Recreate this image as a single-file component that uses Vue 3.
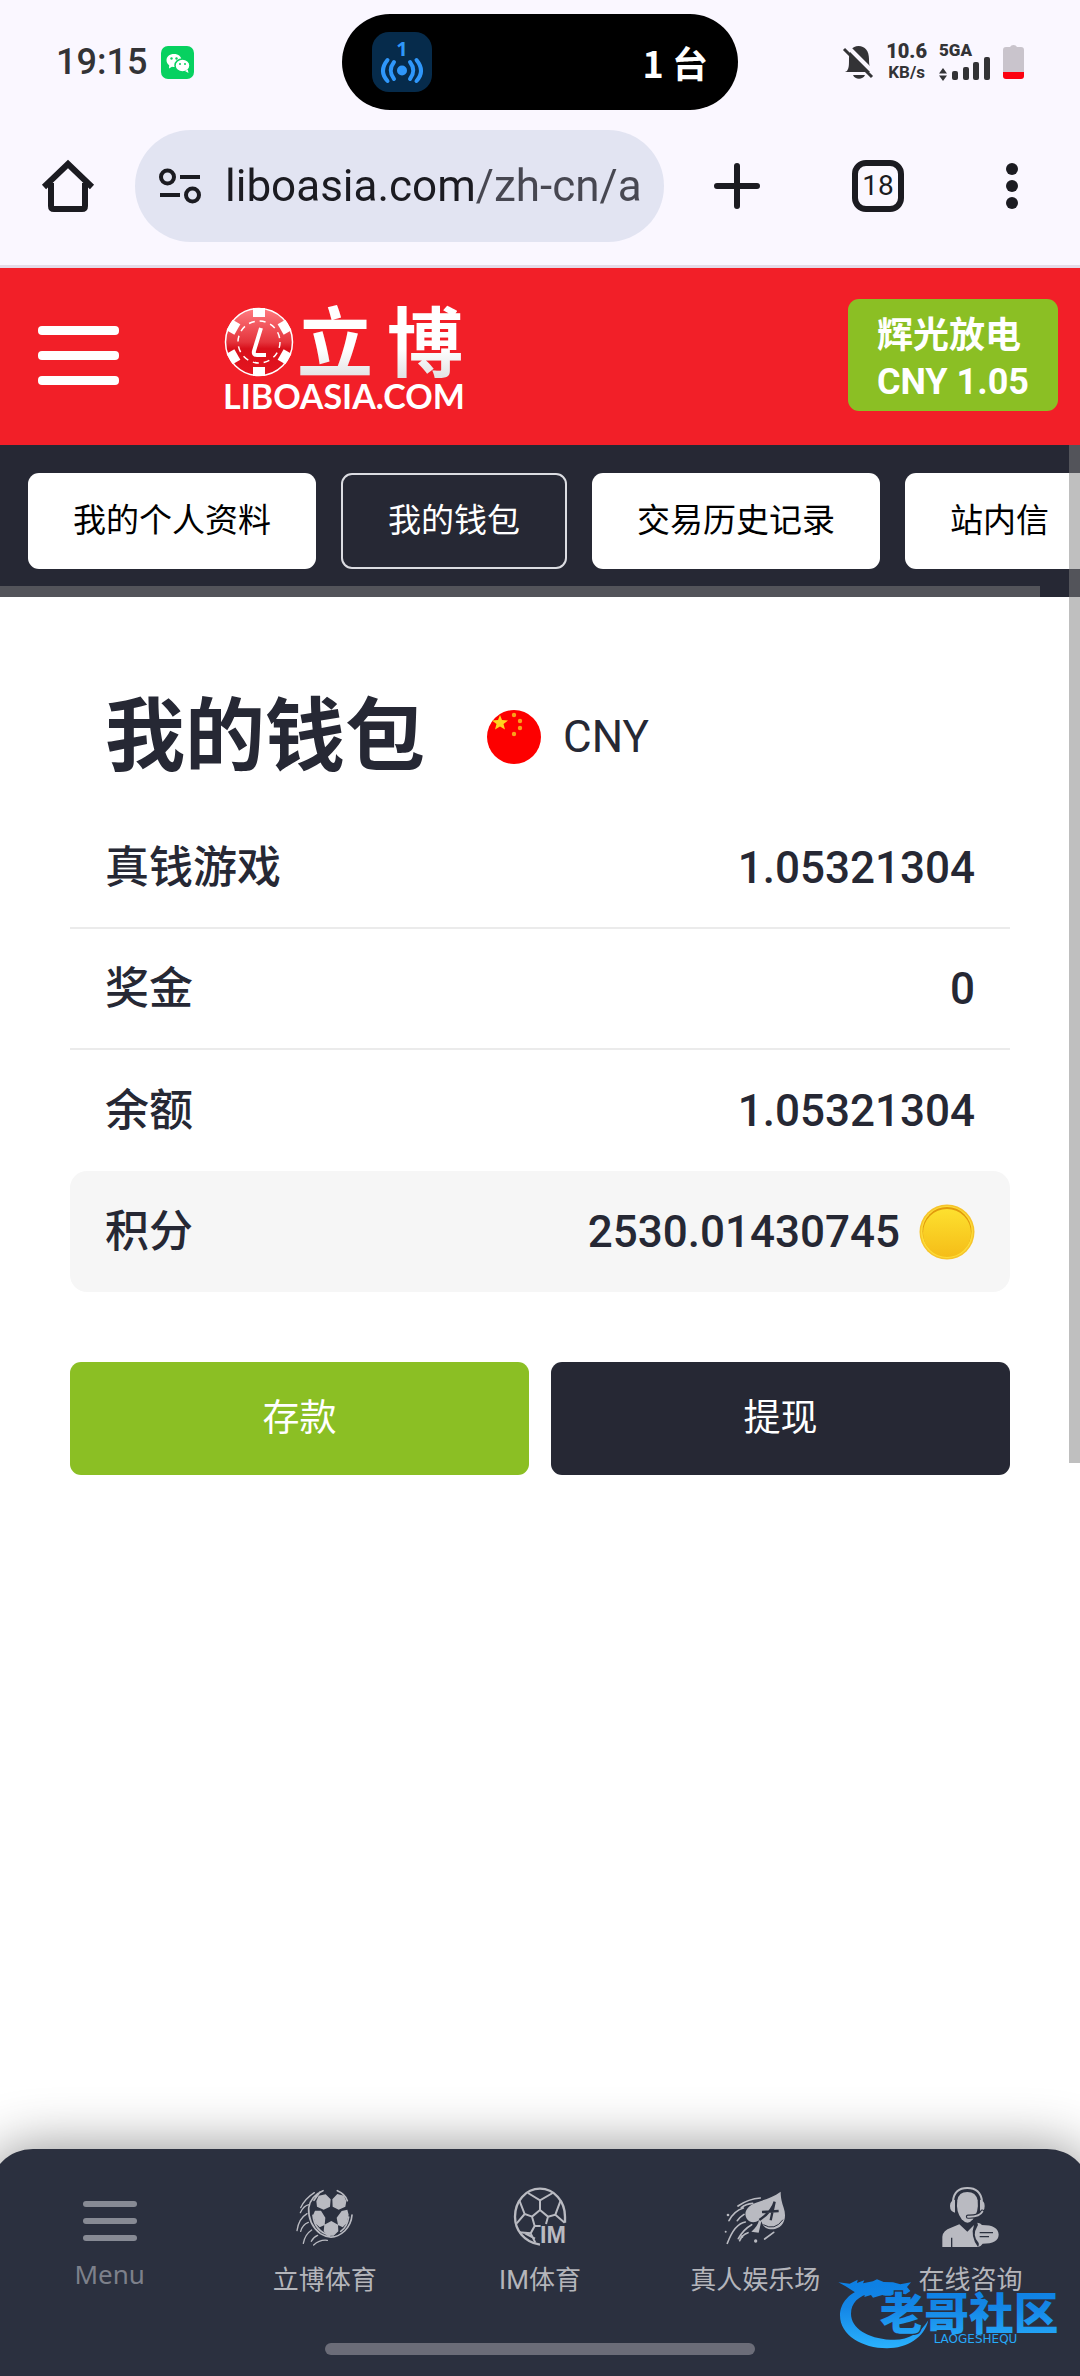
<script setup>
import { ref } from 'vue'

const address = ref('liboasia.com/zh-cn/account')

const tabs = [
  { label: '我的个人资料', active: false },
  { label: '我的钱包', active: true },
  { label: '交易历史记录', active: false },
  { label: '站内信', active: false },
]

const balances = [
  { label: '真钱游戏', value: '1.05321304' },
  { label: '奖金', value: '0' },
  { label: '余额', value: '1.05321304' },
  { label: '积分', value: '2530.01430745', points: true },
]
</script>

<template>
  <div class="screen">
    <div class="chrome">
      <div class="status">
        <div class="status-left">
          <span class="time">19:15</span>
          <svg width="33" height="33" viewBox="0 0 33 33" aria-hidden="true">
            <rect width="33" height="33" rx="7" fill="#07d160" />
            <path d="M13 8c-4.500 0-7.500 2.700-7.500 6.300 0 2 1 3.800 2.700 5L8 22.500l3-1.800c7 1.300 9.500-2 9.500-6.400C20.500 10.700 17.500 8 13 8z" fill="#fff" />
            <ellipse cx="21.500" cy="19.500" rx="7.500" ry="6.500" fill="#fff" stroke="#07d160" stroke-width="1.500" />
            <path d="M24 25l3.500 2-.8-3.500z" fill="#fff" />
            <g fill="#07d160"><circle cx="10.500" cy="12.500" r="1.200" /><circle cx="15.500" cy="12.500" r="1.200" /><circle cx="19" cy="18" r="1" /><circle cx="24" cy="18" r="1" /></g>
          </svg>
        </div>
        <div class="island">
          <svg width="60" height="60" viewBox="0 0 60 60" aria-hidden="true">
            <rect width="60" height="60" rx="17" fill="#062b4b" />
            <text x="30" y="24" text-anchor="middle" font-family="Noto Sans, sans-serif" font-weight="700" font-size="20" fill="#2f97fa">1</text>
            <circle cx="30" cy="38.500" r="5" fill="#2f97fa" />
            <path d="M22 30q-6.500 8.500 0 17M38 30q6.500 8.500 0 17M15.500 28q-9 11 0 21M44.500 28q9 11 0 21" fill="none" stroke="#2f97fa" stroke-width="4" stroke-linecap="round" />
          </svg>
          <span>1 台</span>
        </div>
        <div class="status-right">
          <svg width="31" height="35" viewBox="0 0 31 35" aria-hidden="true">
            <path d="M4 26c2-3 2-6 2-12C6 6 9 1 15.500 1S26 6 26 14c0 7 1 9 4 13H2zM10 30h12c-2 5-10 5-12 0z" fill="#333336" />
            <path d="M4 1l30 30" stroke="#faf7ff" stroke-width="4" />
            <path d="M1 4l28 28" stroke="#333336" stroke-width="3" />
          </svg>
          <div class="speed"><b>10.6</b><span>KB/s</span></div>
          <div class="signal">
            <b>5GA</b>
            <svg width="52" height="25" viewBox="0 0 52 25" aria-hidden="true">
              <path d="M0 17.500L4 12l4 5.500zM0 19.500h8L4 25z" fill="#333336" />
              <g fill="#333336"><rect x="13" y="15" width="6" height="9" rx="2" /><rect x="24" y="11" width="6" height="13" rx="2" /><rect x="34" y="6" width="6" height="18" rx="2" /><rect x="45" y="1" width="6" height="23" rx="2" /></g>
            </svg>
          </div>
          <svg width="21" height="34" viewBox="0 0 21 34" aria-hidden="true">
            <path d="M3 2h4q1-2 3.500-2T14 2h4q3 0 3 3v22H0V5q0-3 3-3z" fill="#c9c4cc" />
            <path d="M0 27h21v4q0 3-3 3H3q-3 0-3-3z" fill="#fc0210" />
          </svg>
        </div>
      </div>

      <div class="toolbar">
        <button class="icon-btn" aria-label="主页">
          <svg width="52" height="52" viewBox="0 0 52 52" fill="none" stroke="#1b1b21" stroke-width="6" stroke-linejoin="round"><path d="M9 23v23q0 3 3 3h28q3 0 3-3V23" /><path d="M2 27L26 4l24 23" stroke-linejoin="miter" /></svg>
        </button>
        <div class="omnibox">
          <svg width="42" height="36" viewBox="0 0 42 36" fill="none" stroke="#1b1b21" stroke-width="4" aria-hidden="true"><circle cx="8.500" cy="9" r="6.500" /><path d="M21 9h20M1 27h20" /><circle cx="33.500" cy="27" r="6.500" /></svg>
          <input v-model="address" class="address" type="text" aria-label="网址" />
        </div>
        <button class="icon-btn plus" aria-label="新标签页">
          <svg width="46" height="46" viewBox="0 0 46 46" stroke="#1b1b21" stroke-width="6" stroke-linecap="round"><path d="M23 3v40M3 23h40" /></svg>
        </button>
        <button class="icon-btn tab-count" aria-label="标签页">18</button>
        <button class="icon-btn" aria-label="更多">
          <svg width="12" height="46" viewBox="0 0 12 46" fill="#1b1b21"><circle cx="6" cy="6" r="6" /><circle cx="6" cy="23" r="6" /><circle cx="6" cy="40" r="6" /></svg>
        </button>
      </div>
    </div>

    <header class="site-header">
      <button class="icon-btn" aria-label="菜单">
        <svg width="81" height="59" viewBox="0 0 81 59" fill="#fff"><rect width="81" height="9" rx="4" /><rect y="25" width="81" height="9" rx="4" /><rect y="50" width="81" height="9" rx="4" /></svg>
      </button>
      <a class="logo" href="#" aria-label="立博 LIBOASIA.COM">
        <svg width="246" height="112" viewBox="0 0 246 112">
          <defs>
            <linearGradient id="chip" x1="0" y1="0" x2="0" y2="1"><stop offset="0" stop-color="#ff7b80" /><stop offset=".5" stop-color="#e5343c" /><stop offset=".6" stop-color="#d9101b" /><stop offset="1" stop-color="#e5141f" /></linearGradient>
            <linearGradient id="silver" x1="0" y1="0" x2="0" y2="1"><stop offset=".6" stop-color="#fff" /><stop offset="1" stop-color="#d3d3d5" /></linearGradient>
          </defs>
          <g transform="translate(34 43)">
            <circle r="33.500" fill="url(#chip)" stroke="#fff" stroke-width="1.500" />
            <g fill="#fff"><rect v-for="a in [0, 60, 120, 180, 240, 300]" :key="a" x="-6" y="-34" width="12" height="9" :transform="`rotate(${a})`" /></g>
            <circle r="21" fill="none" stroke="#fff" stroke-width="1.500" stroke-dasharray="6 5" />
            <path d="M2-14L-5 9q-1 4 3 4h9" fill="none" stroke="#fff" stroke-width="4" />
          </g>
          <g class="logo-name" fill="url(#silver)"><text x="72" y="72">立</text><text x="162" y="72">博</text></g>
          <text class="logo-domain" x="-2" y="110" fill="#fff">LIBOASIA.COM</text>
        </svg>
      </a>
      <button class="account"><span>辉光放电</span><span>CNY 1.05</span></button>
    </header>

    <div class="content">
      <nav class="tabs">
        <a v-for="tab in tabs" :key="tab.label" href="#" class="tab" :class="{ active: tab.active }">{{ tab.label }}</a>
        <span class="scroll-x"></span>
      </nav>

      <main class="wallet">
        <div class="title-row">
          <h1>我的钱包</h1>
          <div class="currency">
            <svg width="54" height="54" viewBox="0 0 54 54" aria-hidden="true">
              <circle cx="27" cy="27" r="27" fill="#fd0000" />
              <path d="M13 5l2 5 6 .5-4.500 3.500 1.500 5.500-5-3-5 3 1.500-5.500L5 10.500l6-.5z" fill="#ffd21f" />
              <g fill="#f9a01b"><circle cx="27" cy="5" r="2.200" /><circle cx="33" cy="11" r="2.200" /><circle cx="33" cy="18" r="2.200" /><circle cx="27" cy="24" r="2.200" /></g>
            </svg>
            <span>CNY</span>
          </div>
        </div>

        <table class="balances">
          <tbody>
            <tr v-for="row in balances" :key="row.label" :class="{ points: row.points }">
              <th scope="row">{{ row.label }}</th>
              <td>
                <div class="amount">
                  <span>{{ row.value }}</span>
                  <svg v-if="row.points" width="56" height="56" viewBox="0 0 56 56" aria-hidden="true">
                    <defs><linearGradient id="coin" x1="0" y1="0" x2="0" y2="1"><stop offset="0" stop-color="#fde02f" /><stop offset="1" stop-color="#f5bd18" /></linearGradient></defs>
                    <circle cx="28" cy="28" r="27.500" fill="#f6c42a" />
                    <circle cx="28" cy="28" r="26" fill="#fddc38" />
                    <circle cx="28" cy="27.500" r="24.500" fill="#e19a0c" />
                    <circle cx="28" cy="29" r="24" fill="url(#coin)" />
                  </svg>
                </div>
              </td>
            </tr>
          </tbody>
        </table>

        <div class="actions">
          <button class="deposit">存款</button>
          <button class="withdraw">提现</button>
        </div>
      </main>
      <span class="scroll-y"></span>
    </div>

    <footer class="dock">
      <nav class="dock-items">
        <a href="#" class="dock-item menu">
          <svg width="54" height="40" viewBox="0 0 54 40" fill="#878a94" aria-hidden="true"><rect width="54" height="6" rx="3" /><rect y="17" width="54" height="6" rx="3" /><rect y="34" width="54" height="6" rx="3" /></svg>
          <span>Menu</span>
        </a>
        <a href="#" class="dock-item">
          <svg width="60" height="60" viewBox="886 200 180 180" fill="#b9bac1" aria-hidden="true">
            <path d="M957 226l21-4 15 15-2 22-19 9-20-9-2-16zM1033 226l-20-5-15 16 1 22 18 9 20-9 3-16zM946 271l18 0 13 21-2 22-15 7-13-12-7-24zM1043 268l-17 4-15 20 4 22 14 7 12-12 6-26zM995 302l20 11 1 20-14 13h-17l-13-13 2-20z" />
            <g fill="none" stroke="#b9bac1" stroke-width="5" stroke-linecap="round">
              <path d="M970 211q-38 16-43 52-2 48 35 77 38 24 73-8 20-20 22-48M1013 211q24 10 30 30M940 285q4 46 50 60M1047 290q-4 30-24 43M943 240l18-25" />
              <path d="M944 217q-28 18-41 45M928 253q-16 3-26 24M922 280q-25 15-30 51M926 306q-18 7-23 27M936 329q-20 13-25 40M954 345q-13 5-19 18M983 360q-22-3-41 14" stroke-width="4" />
            </g>
          </svg>
          <span>立博体育</span>
        </a>
        <a href="#" class="dock-item">
          <svg width="60" height="60" viewBox="330 202 180 180" aria-hidden="true">
            <g fill="none" stroke="#b9bac1" stroke-width="7">
              <path d="M420 375c-48-8-75-44-75-84 0-46 32-84 75-84s75 38 75 84v18" />
              <path d="M384 220l36 22 38-22M420 242v29M420 271l-24 20 8 28h18M420 271l24 20-6 22M396 291l-22-8-16-41M374 283l-24 28M444 291l22-6 16-43M466 285l28 24M404 319l-12 22-35-3M392 341l14 28M375 341l30 16" stroke-width="6" />
            </g>
            <text x="420" y="371" font-family="Liberation Sans, sans-serif" font-weight="700" font-size="70" fill="#b9bac1">IM</text>
          </svg>
          <span>IM体育</span>
        </a>
        <a href="#" class="dock-item">
          <svg width="66" height="60" viewBox="2 203 198 180" aria-hidden="true">
            <path d="M178 217c-24 18-50 24-76 34-28 11-36 32-25 48 9 12 24 12 36 4-3 12-9 22-23 34l22 3 8-34c6 20 22 27 41 23 30-8 35-38 26-64-5-16-9-28-9-48z" fill="#b9bac1" />
            <path d="M114 302q38-25 46-55l-12 56M122 278l50-3" fill="none" stroke="#2b303f" stroke-width="7" />
            <path d="M126 316q34 20 59-15" fill="none" stroke="#2b303f" stroke-width="3" />
            <g fill="none" stroke="#b9bac1" stroke-width="5" stroke-linecap="round"><path d="M117 236q-35 2-67 24M94 252q-21 2-34 13M66 266q-28 9-43 38M68 285q-14 9-20 19M72 308q-32 5-54 64M91 316q-26 15-40 42M80 340q-18 6-25 24M157 339l-27 20" /></g>
            <g fill="#b9bac1"><circle cx="20" cy="287" r="4" /><circle cx="13" cy="337" r="3" /><circle cx="103" cy="365" r="5" /><circle cx="62" cy="352" r="4" /></g>
          </svg>
          <span>真人娱乐场</span>
        </a>
        <a href="#" class="dock-item">
          <svg width="60" height="60" viewBox="661 198 180 180" aria-hidden="true">
            <g fill="#b9bac1">
              <path d="M713 238q4-25 30-25t31 25q4 34-14 57-16 20-34 0-18-24-13-57z" />
              <path d="M706 236q-15 2-15 19t15 20zM781 236q14 2 14 19t-14 20z" />
              <path d="M668 378v-31q2-20 26-27l25-10 24 22 20-20q-12 34 12 66z" />
              <path d="M772 318q5-7 1-13 10 1 14 7 49 0 50 29-1 27-48 27-5 8-14 10 4-6 2-12-21-23-5-48z" />
            </g>
            <path d="M700 240q4-39 43-39t44 39" fill="none" stroke="#b9bac1" stroke-width="6" />
            <path d="M788 272q-8 16-43 15" fill="none" stroke="#2b303f" stroke-width="13" stroke-linecap="round" />
            <path d="M788 272q-8 16-43 15" fill="none" stroke="#b9bac1" stroke-width="6" stroke-linecap="round" />
            <path d="M780 335h40M780 347h28M696 350v28" fill="none" stroke="#2b303f" stroke-width="4" />
          </svg>
          <span>在线咨询</span>
        </a>
      </nav>
      <div class="home-indicator"></div>

      <svg class="watermark" width="228" height="78" viewBox="350 455 684 234">
        <defs><linearGradient id="sea" x1="0" y1="455" x2="0" y2="689" gradientUnits="userSpaceOnUse"><stop offset=".15" stop-color="#0d80e4" /><stop offset=".45" stop-color="#1486e6" /><stop offset="1" stop-color="#2bb4ff" /></linearGradient></defs>
        <g fill="url(#sea)">
          <path d="M440 500C385 515 359 550 359 585c0 60 66 99 141 99 60 0 112-32 124-84-24 40-64 62-114 58-68-4-118-34-118-78 0-32 22-54 62-62z" />
          <path d="M354 486l34 4 24-12-2 10 22-8-4 9 30-6 12-6 20 8 28 1 22 6 32-6-12 14 10 12-14 10-28-4-24 12-18-6-28 8-6-8-20 6 2-10-30-4-28-18z" />
          <text class="wm-name" x="478" y="629">老哥社区</text>
          <text class="wm-latin" x="640" y="668">LAOGESHEQU</text>
        </g>
      </svg>
    </footer>
  </div>
</template>

<style>
body { margin: 0; background: #fff; }
</style>

<style scoped>
.screen {
  display: flex;
  flex-direction: column;
  min-height: 100vh;
  overflow: hidden;
  background: #fff;
  color: #262834;
  font-family: Roboto, "Noto Sans CJK SC", sans-serif;
}
.screen * { box-sizing: border-box; }
svg { display: block; flex: none; overflow: visible; }
button { border: 0; padding: 0; background: none; font: inherit; color: inherit; }
a { color: inherit; text-decoration: none; }

.chrome { padding-top: 14px; background: #faf7ff; border-bottom: 3px solid #e4dbe8; }
.status {
  display: grid;
  grid-template-columns: 1fr auto 1fr;
  align-items: center;
  padding: 0 56px;
}
.status-left { display: flex; align-items: center; gap: 14px; }
.time { font-size: 36px; font-weight: 500; color: #333336; }
.island {
  display: flex;
  align-items: center;
  justify-content: space-between;
  width: 396px;
  height: 96px;
  padding: 0 30px;
  border-radius: 48px;
  background: #000;
  color: #fff;
  font-family: "Noto Sans CJK SC", sans-serif;
  font-size: 36px;
  font-weight: 700;
  line-height: 40px;
}
.status-right { display: flex; align-items: center; justify-content: flex-end; gap: 12px; color: #333336; }
.speed { display: flex; flex-direction: column; align-items: center; font-size: 20px; font-weight: 700; line-height: 21px; }
.speed span { font-size: 17px; }
.signal { display: flex; flex-direction: column; font-size: 17px; font-weight: 700; line-height: 12px; }

.toolbar { display: flex; align-items: center; padding: 20px 62px 23px 42px; }
.omnibox {
  display: flex;
  flex: 1;
  align-items: center;
  gap: 24px;
  min-width: 0;
  height: 112px;
  margin: 0 50px 0 41px;
  padding: 0 23px 0 24px;
  border-radius: 56px;
  background: #e2e4f2;
}
.address {
  flex: 1;
  min-width: 0;
  height: 60px;
  padding: 0;
  border: 0;
  outline: 0;
  background: linear-gradient(90deg, #1b1b21 252px, #474751 252px);
  background-clip: text;
  color: transparent;
  font: 400 44px/60px Roboto, sans-serif;
}
.plus { margin-right: 92px; }
.tab-count {
  width: 52px;
  height: 52px;
  margin-right: 102px;
  border: 6px solid #1b1b21;
  border-radius: 14px;
  color: #1b1b21;
  font-size: 28px;
  line-height: 40px;
}

.site-header {
  display: flex;
  align-items: center;
  padding: 31px 22px 34px 38px;
  background: #f21f28;
  color: #fff;
}
.logo { margin-left: 106px; }
.logo-name { font: 700 76px "Noto Sans CJK SC", sans-serif; }
.logo-domain { font: 700 34px Lato, sans-serif; }
.account {
  display: flex;
  flex-direction: column;
  justify-content: center;
  align-items: flex-start;
  height: 112px;
  margin-left: auto;
  padding: 8px 29px 0;
  border-radius: 11px;
  background: #8bbf24;
  font-size: 36px;
  font-weight: 700;
  line-height: 46px;
}

.content { position: relative; flex: 1; }
.tabs {
  position: relative;
  display: flex;
  gap: 25px;
  padding: 28px 28px;
  overflow: hidden;
  background: #262834;
}
.tab {
  flex: none;
  padding: 0 45px;
  border-radius: 11px;
  background: #fff;
  color: #000;
  font-size: 33px;
  line-height: 96px;
}
.tab.active { border: 2px solid #dcdde2; background: none; color: #fff; line-height: 92px; }
.scroll-x { position: absolute; left: 0; right: 40px; bottom: 0; height: 11px; background: rgba(128, 128, 128, .5); }
.scroll-y { position: absolute; top: 0; right: 0; width: 11px; height: 1018px; background: rgba(128, 128, 128, .5); }

.wallet { padding: 100px 70px; }
.title-row { display: flex; align-items: center; gap: 62px; height: 80px; padding: 0 35px; }
h1 { margin: 0; font-size: 80px; font-weight: 700; line-height: 84px; }
.currency { display: flex; align-items: center; gap: 22px; font-size: 44px; line-height: 54px; }
.balances { width: 100%; margin-top: 31px; border-spacing: 0; font-size: 44px; line-height: 54px; }
.balances th, .balances td { height: 121px; padding: 0 35px; border-bottom: 2px solid #ebebeb; font-weight: 500; }
.balances th { text-align: left; }
.balances tr:nth-last-child(-n + 2) > * { border-bottom: 0; }
.points > * { background: #f6f6f6; }
.points th { border-radius: 17px 0 0 17px; }
.points td { border-radius: 0 17px 17px 0; }
.amount { display: flex; align-items: center; justify-content: flex-end; gap: 19px; }
.actions { display: flex; gap: 22px; margin-top: 70px; }
.actions button { flex: 1; height: 113px; border-radius: 11px; color: #fff; font-size: 37px; line-height: 44px; }
.deposit { background: #8bbf24; }
.withdraw { background: #262834; }

.dock {
  position: relative;
  margin: 0 -11px;
  padding: 38px 13px 21px;
  border-radius: 44px 44px 0 0;
  background: #2b303f;
  box-shadow: 0 0 56px rgba(0, 0, 0, .45);
}
.dock-items { display: flex; }
.dock-item {
  display: flex;
  flex: 1;
  flex-direction: column;
  align-items: center;
  gap: 16px;
  color: #b4b5bb;
  font-size: 26px;
  line-height: 34px;
}
.dock-item.menu { padding-top: 14px; color: #7d808b; font-family: "Noto Sans", sans-serif; }
.home-indicator { width: 40%; height: 12px; margin: 46px auto 0; border-radius: 6px; background: #6b6c78; }
.watermark { position: absolute; right: 26px; bottom: 26px; }
.wm-name { font: 900 134px "Noto Sans CJK SC", sans-serif; stroke: #2b303f; stroke-width: 8px; paint-order: stroke; }
.wm-latin { font: 400 36px "DejaVu Sans", sans-serif; }
</style>
